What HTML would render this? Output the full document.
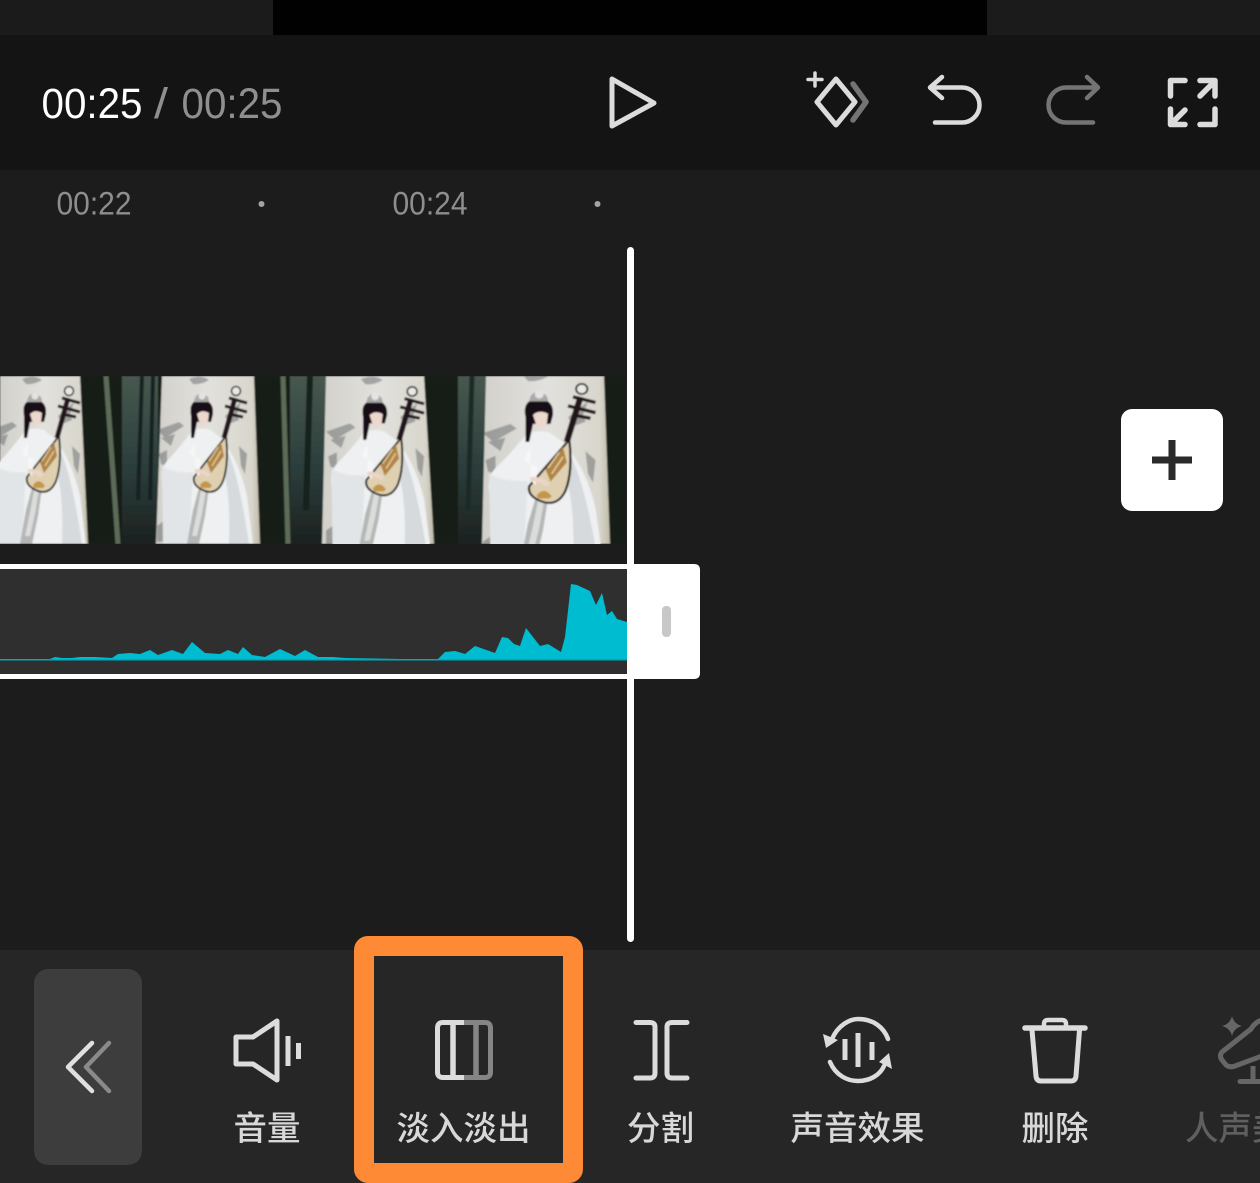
<!DOCTYPE html>
<html><head><meta charset="utf-8"><style>
html,body{margin:0;padding:0;width:1260px;height:1183px;overflow:hidden;background:#1c1c1c}
svg{display:block}
text{font-family:"Liberation Sans","Noto Sans CJK SC",sans-serif}
</style></head><body>
<svg width="1260" height="1183" viewBox="0 0 1260 1183" xmlns="http://www.w3.org/2000/svg">
<defs>
<clipPath id="tc"><rect x="0" y="376" width="626" height="168"/></clipPath>
<filter id="b" x="-5%" y="-5%" width="110%" height="110%"><feGaussianBlur stdDeviation="0.7"/></filter>
<linearGradient id="fg" x1="0" y1="0" x2="0" y2="1"><stop offset="0" stop-color="#47584f"/><stop offset=".55" stop-color="#2b3d3b"/><stop offset="1" stop-color="#1c2120"/></linearGradient>
<linearGradient id="pg" x1="0" y1="0" x2="1" y2="0"><stop offset="0" stop-color="#d2d0ca"/><stop offset=".5" stop-color="#e2e1dd"/><stop offset=".92" stop-color="#d8d6cc"/><stop offset="1" stop-color="#bfbba8"/></linearGradient>
<g id="fig">
 <g fill="#50565a" opacity=".42">
  <path d="M-44,54 L-22,46 L-17,50 L-36,62Z"/>
  <path d="M-40,62 L-26,58 L-30,70Z"/>
  <path d="M-42,78 L-34,74 L-34,90 L-40,88Z"/>
  <path d="M38,70 L46,78 L44,98 L40,90Z"/>
  <path d="M-12,3 Q0,-2 8,4 Q0,9 -8,8Z"/>
  <path d="M-44,150 L-36,144 L-34,165 L-44,166Z"/>
  <path d="M24,40 L40,26 L36,38 L38,44 L28,48Z"/>
 </g>
 <path d="M-10,56 Q-2,50 10,54 L20,62 Q38,84 46,120 L52,168 H-36 L-39,106 Q-41,92 -33,84 Q-20,70 -10,56Z" fill="#eef0f1"/>
 <path d="M-39,90 Q-26,98 -8,96 L-12,168 H-38Z" fill="#e2e5e7"/>
 <path d="M26,74 Q38,100 48,168 H28 Q30,120 22,92Z" fill="#d6dadc"/>
 <path d="M-2,112 L8,112 L4,140 L-2,168 H-14 L-8,134Z" fill="#b4b7b6"/>
 <path d="M0,114 L5,114 L1,138 L-4,160 L-9,160 L-4,136Z" fill="#dcdcdb"/>
 <path d="M-10,40 Q-13,24 0,24 Q13,24 12,38 L10,46 L-4,46 L-7,62 L-10,62Z" fill="#141112"/>
 <path d="M-4,38 Q1,33 8,37 L7,46 Q3,52 -1,48Z" fill="#ecd8cd"/>
 <path d="M-7,26 Q-6,17 1,18 Q8,19 8,26Z" fill="#a9aaa9"/>
 <circle cx="1" cy="20" r="3.500" fill="#e3e3e3"/>
 <path d="M25,60 L-7,101 Q-9,110 4,115 Q16,119 22,105 Q28,88 25,60Z" fill="#dfd0b2" stroke="#121010" stroke-width="1.800"/>
 <path d="M20,66 L6,86 L10,97 L23,80Z" fill="#b08444"/>
 <path d="M17,71 L8,85 M20,75 L11,90" stroke="#e4cda2" stroke-width="1.300"/>
 <path d="M-1,109 Q5,101 11,110 L9,112 L0,112Z" fill="#c4964a"/>
 <path d="M23,62 L34,22" stroke="#23171a" stroke-width="5"/>
 <path d="M24,30 L46,36 M28,22 L46,27 M28,38 L42,41" stroke="#23171a" stroke-width="3"/>
 <circle cx="35" cy="15" r="4.500" fill="#e8e8e4" stroke="#222" stroke-width="1.500"/>
 <path d="M-6,66 L-12,78 L0,84 L-2,100 L-6,96" fill="#f6f6f6"/>
 <path d="M-6,95 Q2,94 8,100" stroke="#ecd5c8" stroke-width="4" fill="none"/>
</g>
</defs>

<!-- backgrounds -->
<rect x="0" y="0" width="1260" height="35" fill="#1b1b1b"/>
<rect x="273" y="0" width="714" height="35" fill="#010101"/>
<rect x="0" y="35" width="1260" height="135" fill="#141414"/>
<rect x="0" y="170" width="1260" height="780" fill="#1c1c1c"/>
<rect x="0" y="950" width="1260" height="233" fill="#262626"/>

<!-- transport -->
<text x="41.500" y="118" font-size="43" fill="#fff" textLength="101" lengthAdjust="spacingAndGlyphs">00:25</text>
<text x="154" y="118" font-size="43" fill="#8f8f8f" textLength="14" lengthAdjust="spacingAndGlyphs">/</text>
<text x="181.500" y="118" font-size="43" fill="#8f8f8f" textLength="101" lengthAdjust="spacingAndGlyphs">00:25</text>
<path d="M612,79 L654,103 L612,126Z" fill="none" stroke="#dcdcdc" stroke-width="5" stroke-linejoin="round"/>

<g fill="none" stroke-linecap="round" stroke-linejoin="round">
 <path d="M853,84 L866,102 L853,120" stroke="#747474" stroke-width="5.500"/>
 <path d="M836,79 L855,102 L836,125 L817,102Z" stroke="#dcdcdc" stroke-width="5"/>
 <path d="M815,73 V86 M808,79.500 H822" stroke="#dcdcdc" stroke-width="3.500"/>
 <path d="M942,77 L930,87.500 L942,98 M930,87.500 H962 A17.500,17.500 0 0 1 962,122.500 H935" stroke="#dcdcdc" stroke-width="4.500"/>
 <path d="M1087,77 L1098,87.500 L1087,98 M1098,87.500 H1066 A17.500,17.500 0 0 0 1066,122.500 H1093" stroke="#747474" stroke-width="4.500"/>
 <path d="M1185,80.500 H1170.500 V96 M1200,80.500 H1215 V96 M1214,82 L1200,96 M1170.500,109 V124.500 H1185 M1171,124 L1185,110 M1200,124.500 H1215 V109" stroke="#dcdcdc" stroke-width="5.500"/>
</g>

<!-- ruler -->
<text x="56.500" y="214.500" font-size="32" fill="#8e8e8e" textLength="75" lengthAdjust="spacingAndGlyphs">00:22</text>
<text x="392.500" y="214.500" font-size="32" fill="#8e8e8e" textLength="75" lengthAdjust="spacingAndGlyphs">00:24</text>
<circle cx="261.500" cy="204" r="3" fill="#a3a3a3"/>
<circle cx="597.500" cy="204" r="3" fill="#a3a3a3"/>

<!-- thumbnails -->
<g clip-path="url(#tc)">
 <g filter="url(#b)">
 <rect x="0" y="376" width="626" height="168" fill="#141a18"/>
 <rect x="122" y="376" width="36" height="168" fill="url(#fg)"/>
 <rect x="290" y="376" width="36" height="168" fill="url(#fg)"/>
 <rect x="458" y="376" width="28" height="168" fill="url(#fg)"/>
 <path d="M106,376 L118,544" stroke="#5c6c58" stroke-width="5"/>
 <path d="M283,376 L288,544" stroke="#5c6c58" stroke-width="5"/>
 <path d="M142,376 L138,500 M153,376 L150,500" stroke="#152220" stroke-width="4"/>
 <path d="M310,376 L306,510" stroke="#12201d" stroke-width="6"/>
 <path d="M472,376 L468,510" stroke="#1a2a27" stroke-width="5"/>
 <path d="M0,376 H80 L88,544 H0Z" fill="url(#pg)"/>
 <path d="M162,376 H254 L260,544 H156Z" fill="url(#pg)"/>
 <path d="M326,376 H424 L434,544 H322Z" fill="url(#pg)"/>
 <path d="M486,376 H604 L610,544 H482Z" fill="url(#pg)"/>
 <use href="#fig" transform="translate(34,376)"/>
 <use href="#fig" transform="translate(201,376)"/>
 <use href="#fig" transform="translate(374,376) scale(1.09,1.03)"/>
 <use href="#fig" transform="translate(538,372) scale(1.25,1.13)"/>
 </g>
</g>

<!-- audio clip -->
<rect x="0" y="564" width="630" height="115" fill="#fff"/>
<rect x="0" y="569" width="627" height="105" fill="#2f2f2f"/>
<path d="M0,660 V659 L50,659 55,657 62,658 72,658 80,657 95,657 112,658 118,654 130,653 140,654 150,650 158,655 172,650 183,654 192,642 205,653 220,654 228,650 238,654 243,647 252,655 265,657 280,649 295,656 305,650 318,657 333,657 345,658 400,659 438,659 445,652 455,651 465,654 475,646 495,653 502,637 508,638 514,644 520,646 526,628 533,637 540,646 548,644 561,652 565,637 571,584 577,585 590,591 596,605 602,593 607,615 612,611 617,619 627,622 V660Z" fill="#00bcd0"/>
<rect x="0" y="659" width="627" height="1.500" fill="#00a9bb"/>
<path d="M627,564 H694 Q700,564 700,570 V673 Q700,679 694,679 H627Z" fill="#fff"/>
<rect x="662" y="606" width="9" height="31" rx="4" fill="#c8c8c8"/>
<!-- playhead -->
<rect x="627" y="247" width="7" height="695" rx="3.500" fill="#fff"/>
<!-- add -->
<rect x="1121" y="409" width="102" height="102" rx="11" fill="#fff"/>
<path d="M1172,440 V480 M1152,460 H1192" stroke="#2a2a2a" stroke-width="7" fill="none"/>

<!-- back -->
<rect x="34" y="969" width="108" height="196" rx="14" fill="#3d3d3d"/>
<g fill="none" stroke-linecap="round" stroke-linejoin="round" stroke-width="4.500">
 <path d="M109,1043 L86,1067 L109,1091" stroke="#8a8a8a"/>
 <path d="M92,1043 L68,1067 L92,1091" stroke="#e0e0e0"/>
</g>

<!-- orange frame -->
<rect x="364" y="946" width="209" height="227" rx="4" fill="none" stroke="#ff8a35" stroke-width="20"/>

<!-- icons -->
<g fill="none" stroke="#dcdcdc" stroke-linecap="round" stroke-linejoin="round">
 <path d="M236,1037 H253 L277,1021 V1080 L253,1064 H236Z" stroke-width="5"/>
 <path d="M288,1036 V1066 M298.500,1043 V1059" stroke-width="5" stroke-linecap="butt"/>
 <path d="M464,1022.500 H443 Q437.500,1022.500 437.500,1028 V1072 Q437.500,1077.500 443,1077.500 H464" stroke-width="5" stroke-linecap="butt"/>
 <path d="M453,1022 V1078" stroke-width="5.500" stroke-linecap="butt"/>
 <path d="M464,1022.500 H485 Q490.500,1022.500 490.500,1028 V1072 Q490.500,1077.500 485,1077.500 H464" stroke="#858585" stroke-width="5" stroke-linecap="butt"/>
 <path d="M476,1022 V1078" stroke="#858585" stroke-width="5.500" stroke-linecap="butt"/>
 <path d="M636,1022.500 H650 Q655,1022.500 655,1027 V1073 Q655,1078 650,1078 H636 M687,1022.500 H672 Q667,1022.500 667,1027 V1073 Q667,1078 672,1078 H687" stroke-width="5"/>
 <path d="M832,1039 C838,1025 850,1019 858,1019 C874,1019 884,1028 888,1039" stroke-width="4.500"/>
 <path d="M830,1062 C836,1076 848,1081 858,1081 C870,1081 880,1075 884,1066" stroke-width="4.500"/>
 <path d="M845,1039 V1060 M858,1033 V1067 M872,1042 V1060" stroke-width="5" stroke-linecap="butt"/>
 <path d="M1025,1028 H1085" stroke-width="5.500"/>
 <path d="M1044,1026 V1024 Q1044,1020 1048,1020 H1062 Q1066,1020 1066,1024 V1026" stroke-width="4.500"/>
 <path d="M1032,1030 L1036,1076 Q1036.500,1081 1041,1081 H1071 Q1075.500,1081 1076,1076 L1079.500,1030" stroke-width="5"/>
</g>
<path d="M823,1034 L838,1040 L826,1048Z" fill="#dcdcdc"/>
<path d="M892,1069 L879,1062 L889,1053Z" fill="#dcdcdc"/>

<!-- partial mic -->
<path d="M1232,1016 Q1234,1024 1242,1026 Q1234,1028 1232,1036 Q1230,1028 1222,1026 Q1230,1024 1232,1016Z" fill="#666"/>
<g fill="none" stroke="#666" stroke-linecap="round" stroke-linejoin="round" stroke-width="5">
 <path d="M1262,1020 Q1255,1022 1251,1029 L1222,1052 Q1219,1056 1222,1060 L1226,1065 Q1230,1068 1235,1066 L1262,1056"/>
 <path d="M1253,1066 V1081" stroke-linecap="butt"/>
 <path d="M1240,1081.500 H1262"/>
</g>

<!-- labels -->
<g font-size="33.500" font-weight="500" fill="#d8d8d8">
 <text x="233.500" y="1140">音量</text>
 <text x="396.500" y="1140">淡入淡出</text>
 <text x="627" y="1140">分割</text>
 <text x="790.500" y="1140">声音效果</text>
 <text x="1021.500" y="1140">删除</text>
 <text x="1185" y="1140" fill="#5f5f5f">人声美化</text>
</g>
</svg>
</body></html>
